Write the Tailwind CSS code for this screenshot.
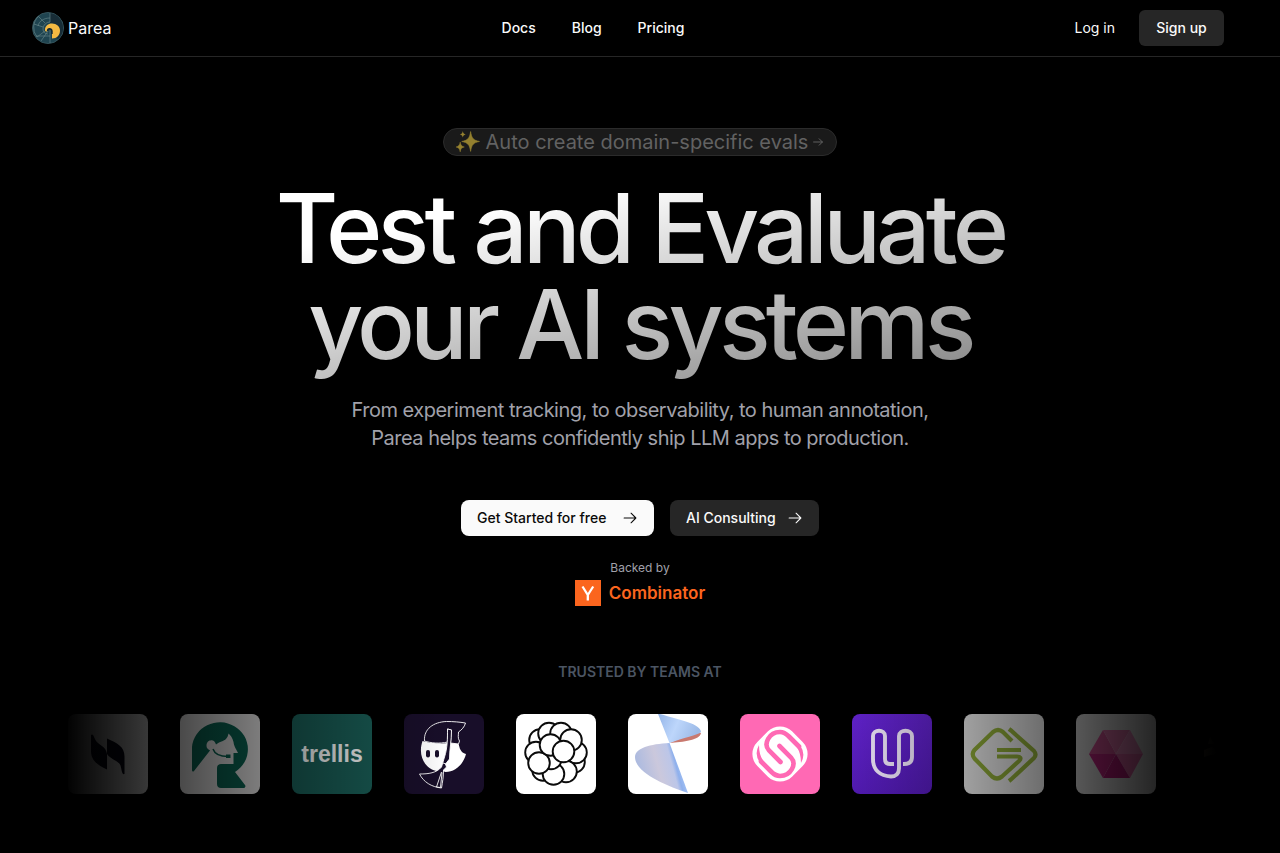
<!DOCTYPE html>
<html lang="en">
<head>
<meta charset="UTF-8">
<meta name="viewport" content="width=device-width, initial-scale=1.0">
<title>Parea</title>
<script src="https://cdn.jsdelivr.net/npm/@tailwindcss/browser@4"></script>
</head>
<body class="bg-black text-[#fafafa] font-['Inter',sans-serif] antialiased min-h-screen overflow-x-hidden">

<!-- header -->
<header class="border-b border-[#262626]">
    <div class="flex items-center justify-between h-14 pl-8 pr-14">
        <a href="#" class="flex items-center gap-1 text-base">
            <svg class="size-8" viewBox="0 0 32 32" fill="none">
                <circle cx="16" cy="16" r="15.500" fill="#1f4450" stroke="#34535b"/>
                <path d="M18 1a15 15 0 0 1 8 26l-4-2 5-7-4-6-5-1z" fill="#182d37"/>
                <path d="M18 1v9M7 4a15 15 0 0 0-2 21l8-6M2 12l9 3M7 5l6 6M4 24h14M18 31V18M9 29l7-10M11 17a7 7 0 0 1 7-7M11 17c0 3 2 5 5 5M6 14c1-5 6-8 12-8" stroke="#6d8c8d" stroke-width=".6"/>
                <path d="M13 18c0-4 3-6.500 7-6.500 4.500 0 8 3 8 7 0 4.500-3 8-8 8V19c-1-3-4.500-2.500-4.500 0-1 1-2.500.5-2.500-1z" fill="#f4b942"/>
                <path d="M15.500 19c0-3 4-3 4.500 0v3" stroke="#14262e" stroke-width="1.400"/>
            </svg>
            <span>Parea</span>
        </a>
        <nav class="flex gap-9 text-sm font-medium">
            <a href="#">Docs</a>
            <a href="#">Blog</a>
            <a href="#">Pricing</a>
        </nav>
        <div class="flex items-center gap-6 text-sm">
            <a href="#">Log in</a>
            <a href="#" class="flex items-center justify-center h-9 min-w-[85px] px-4 rounded-md bg-[#262626] font-medium">Sign up</a>
        </div>
    </div>
</header>

<main>
    <!-- hero -->
    <section class="flex flex-col items-center px-8 pt-[71px] text-center">
        <a href="#" class="flex items-center h-7 px-3 rounded-full border border-[#2b2b2b] bg-[#1a1a1a] text-xl text-[#626262]">
            <svg class="size-6 mr-[6px]" viewBox="1 2 23 22" fill="#94802f">
                <path d="M15 3c1 6.500 2.500 8.300 8.500 9.500C17.500 13.700 16 15.500 15 22c-1-6.500-2.500-8.300-8.500-9.500C12.500 11.300 14 9.500 15 3z" stroke="#94802f" stroke-width=".6"/>
                <path d="M5 13c.5 3 1.300 4 4 4.800-2.700.7-3.500 1.700-4 4.700-.5-3-1.300-4-4-4.700C3.700 17 4.500 16 5 13z" stroke="#94802f" stroke-width=".4"/>
                <path d="M7.500 2.500c.3 2 .9 2.700 2.800 3.200-1.900.4-2.500 1.100-2.800 3.100-.3-2-.9-2.700-2.800-3.100 1.900-.5 2.500-1.200 2.800-3.200z"/>
            </svg>
            <span>Auto create domain-specific evals</span>
            <svg class="size-3 ml-1" viewBox="0 0 15 15" fill="none" stroke="currentColor" stroke-width="1.200" stroke-linecap="round" stroke-linejoin="round"><path d="M2 7.500h11M9 3.500l4 4-4 4"/></svg>
        </a>

        <h1 class="w-full py-6 text-8xl leading-none font-medium tracking-tighter bg-gradient-to-br from-white from-30% to-white/40 bg-clip-text text-transparent">Test and Evaluate<br>your AI systems</h1>

        <p class="mb-12 text-xl leading-7 tracking-tight text-[#a1a1aa]">From experiment tracking, to observability, to human annotation,<br>Parea helps teams confidently ship LLM apps to production.</p>

        <div class="flex gap-4 text-sm font-medium">
            <button class="flex items-center justify-between h-9 min-w-[193px] px-4 rounded-lg bg-[#fafafa] text-[#0a0a0a]">
                Get Started for free
                <svg class="size-4" viewBox="0 0 15 15" fill="none" stroke="currentColor" stroke-linecap="round" stroke-linejoin="round"><path d="M2 7.500h11M8.500 3l4.500 4.500L8.500 12"/></svg>
            </button>
            <button class="flex items-center justify-between h-9 min-w-[149px] px-4 rounded-lg bg-[#262626]">
                AI Consulting
                <svg class="size-4" viewBox="0 0 15 15" fill="none" stroke="currentColor" stroke-linecap="round" stroke-linejoin="round"><path d="M2 7.500h11M8.500 3l4.500 4.500L8.500 12"/></svg>
            </button>
        </div>

        <p class="mt-6 text-xs leading-4 text-[#a1a1aa]">Backed by</p>
        <a href="#" class="flex items-center gap-2 mt-1 h-[26px] text-[#fb651e] text-[17px] leading-6 font-semibold">
            <svg class="size-[26px]" viewBox="0 0 26 26"><path d="M0 0h26v26H0z" fill="#fb651e"/><path d="M7.500 6.500l5.300 8.500v5.500M18.200 6.500l-5.400 8.500" fill="none" stroke="#fff" stroke-width="2.300"/></svg>
            <span>Combinator</span>
        </a>
    </section>

    <!-- customers -->
    <section class="px-16 pt-14 pb-14">
        <h2 class="text-center text-sm font-semibold text-[#4b5563]">TRUSTED BY TEAMS AT</h2>
        <div class="relative mt-8 overflow-hidden">
            <ul class="flex gap-8 ml-1 *:size-20 *:shrink-0 *:rounded-lg *:overflow-hidden">
                <li class="bg-white"><svg viewBox="0 0 80 80"><path d="M24 20.500c2 0 2 5 6 8.500 3 3 8 4 9 11V24.500c10 4.500 17.500 8 17.500 18V60c-2.500 1-2.500-3-4-8.500-2-5-10-6-13.500-11.500v15.500C29 51 23 46 23 37V21z" fill="#05061a"/></svg></li>
                <li class="bg-[#f4f3f3]">
                    <svg viewBox="0 0 80 80">
                        <path d="M12 56V33a28 27 0 1 1 43 25l10 13c1 1.500 0 3-1.500 3H41c-2.500 0-4-1.500-4-4V54c0-3 2-4 4-4h12.500V39h4.500c-2.500-5-4-7-4.500-11-1-4-3-7-5-8.500-1 5-3 6.500-7 8-3 1-4 2-5.500 3-1-4-4-5-5.500-4-4 0-5 6-3 8 1 1 2 1.500 2.500 2L14 57c-1 1-2 .5-2-1z" fill="#0b6b58"/>
                        <path d="M33 35c2 6 7 7.500 15 7.500" fill="none" stroke="#0b6b58" stroke-width="1.500"/>
                        <path d="M46 40.500h4.500v3.500H46z" fill="#0b6b58"/>
                    </svg>
                </li>
                <li class="flex items-center justify-center bg-[#195c55] font-['Liberation_Sans',sans-serif] font-bold text-[23px] text-[#f2f5f5]">trellis</li>
                <li class="bg-[#180e29]">
                    <svg viewBox="0 0 80 80" stroke-linejoin="round">
                        <path d="M18.500 27c-4 12 0 22 7 27 4 3 10 4 13 3l3 1c10 0 18-8 20.500-18-4-1-4.500-3-6-5l-2-7-9 1c-8 1-20 0-26.500-2z" fill="#fff"/>
                        <path d="M20.500 27c-1-12 9-19 22-19.500 7 0 13 .5 19 1.500-1 4-4 7-7 9 0 3-1 6 1 9l-1 3-8-1 1-13-4-1v13c-8 2-17 1-23-1z" fill="#180e29" stroke="#fff" stroke-width=".9"/>
                        <path d="M43.500 15l4 1c0 10-2 20-2 29l-4 5 1 3-3 3c0 7-1 12-2 18-10-1-18-6-22-14 9 0 17-1 22-7l3-10c3-9 3-19 3-28z" fill="#180e29" stroke="#fff" stroke-width=".9"/>
                        <path d="M37.500 58l-5 15 4 .5 1.500-15M42 50l-3-1" fill="none" stroke="#fff" stroke-width=".9"/>
                        <rect x="22" y="36" width="4" height="7.500" rx="2" fill="#180e29"/>
                        <rect x="31" y="36" width="4" height="7.500" rx="2" fill="#180e29"/>
                    </svg>
                </li>
                <li class="bg-white">
                    <svg viewBox="0 0 80 80" fill="#fff" stroke="#0b0b0b" stroke-width="1.900">
                        <circle cx="27" cy="56" r="10.800"/>
                        <circle cx="24" cy="26" r="10.800"/>
                        <circle cx="33" cy="19.500" r="10.800"/>
                        <circle cx="45" cy="19.500" r="10.800"/>
                        <circle cx="58" cy="48" r="10.800"/>
                        <circle cx="60" cy="38.500" r="10.800"/>
                        <circle cx="55" cy="26" r="10.800"/>
                        <circle cx="50" cy="57.500" r="10.800"/>
                        <circle cx="20" cy="38.500" r="10.800"/>
                        <circle cx="37.500" cy="60" r="10.800"/>
                        <circle cx="35" cy="44.500" r="10.800"/>
                        <circle cx="23" cy="49" r="10.800"/>
                        <circle cx="34.500" cy="31" r="10.800"/>
                        <circle cx="47.500" cy="37.500" r="10.800"/>
                    </svg>
                </li>
                <li class="bg-white">
                    <svg viewBox="0 0 80 80">
                        <defs>
                            <linearGradient id="cone1" x1="0" y1="0" x2="1" y2=".3"><stop offset="0" stop-color="#94b5e8"/><stop offset=".5" stop-color="#bdd6fb"/><stop offset="1" stop-color="#9dbbe8"/></linearGradient>
                            <linearGradient id="cone2" gradientUnits="userSpaceOnUse" x1="10" y1="50" x2="55" y2="38"><stop offset="0" stop-color="#aebbdf"/><stop offset=".4" stop-color="#cbc8dc"/><stop offset=".7" stop-color="#bcc6e8"/><stop offset=".78" stop-color="#8fb0ec"/><stop offset="1" stop-color="#b4d2fc"/></linearGradient>
                        </defs>
                        <path d="M41.500 29C55 28 72 26 73 19l-6-2z" fill="#c9796f"/>
                        <path d="M30 0h2c20 6 41 10 41 18-3 3-18 6-31.500 11z" fill="url(#cone1)"/>
                        <path d="M41.500 29C22 30 7 34 7 43c0 16 32 29 53 36z" fill="url(#cone2)"/>
                    </svg>
                </li>
                <li class="bg-[#ff69b4]">
                    <svg viewBox="0 0 80 80" fill="none">
                        <rect x="15.500" y="15.500" width="49" height="49" rx="17" transform="rotate(45 40 40)" fill="#fff"/>
                        <g stroke="#ff69b4" stroke-width="4.600" stroke-linecap="round">
                            <path d="M39.500 32L51 43.500C57 50 51 62 40 62c-3 0-6-1.500-9-4.500L21 47.500"/>
                            <path d="M40.500 48L29 36.500C23 30 29 18 40 18c3 0 6 1.500 9 4.500L59 32.500"/>
                        </g>
                        <path d="M19 31q-5 9 .5 17L31 59.500l2-3-10-10q-4-6-4-15.500zM61 49q5-9-.5-17L49 20.500l-2 3 10 10q4 6 4 15.500z" fill="#ff69b4"/>
                    </svg>
                </li>
                <li class="bg-linear-to-b from-[#6323d0] to-[#541bb8]">
                    <svg viewBox="0 0 80 80" fill="none" stroke="#efe6fb" stroke-width="3.900">
                        <path d="M42 50h-4c-4 0-5-2-5-5V22c0-7-12-7-12 0v23c0 11 7 17 18 17.500 5 0 8-3 8-8V22c0-7 13-7 13 0v21c0 5-3 7-8 7h-1"/>
                    </svg>
                </li>
                <li class="bg-[#f4f4f4]">
                    <svg viewBox="0 0 80 80" fill="none" stroke="#98b63c" stroke-width="4.200">
                        <path d="M48 27l-9-9q-5-4-10 0L10.500 36q-3.500 4 0 8.500L28 62.500q5 4 10 0L55 47c3-3 1-4.500-2-4.500H33M33 36h24"/>
                        <path d="M45 15l2 1.500L70 37q3 3.500 0 7L47 65.500l-2 1.500"/>
                    </svg>
                </li>
                <li class="bg-[#eee]">
                    <svg viewBox="0 0 80 80">
                        <path d="M27 16l13 24H13z" fill="#e35aa2"/>
                        <path d="M27 16h27L40 40z" fill="#ee7ab6"/>
                        <path d="M54 16l13 24H40z" fill="#f38fc6"/>
                        <path d="M67 40L54 64 40 40z" fill="#ec6cb0"/>
                        <path d="M54 64H27l13-24z" fill="#c51c82"/>
                        <path d="M27 64L13 40h27z" fill="#d32a8e"/>
                    </svg>
                </li>
                <li class="bg-black"><svg viewBox="0 0 80 80"><path d="M22 23l-2 7h6zM16 36l8-3 6 6-14 4z" fill="#a08a60"/></svg></li>
            </ul>
            <div class="pointer-events-none absolute inset-y-0 left-0 w-1/3 bg-linear-to-r from-black to-transparent"></div>
            <div class="pointer-events-none absolute inset-y-0 right-0 w-1/3 bg-linear-to-l from-black to-transparent"></div>
        </div>
    </section>
</main>
</body>
</html>
